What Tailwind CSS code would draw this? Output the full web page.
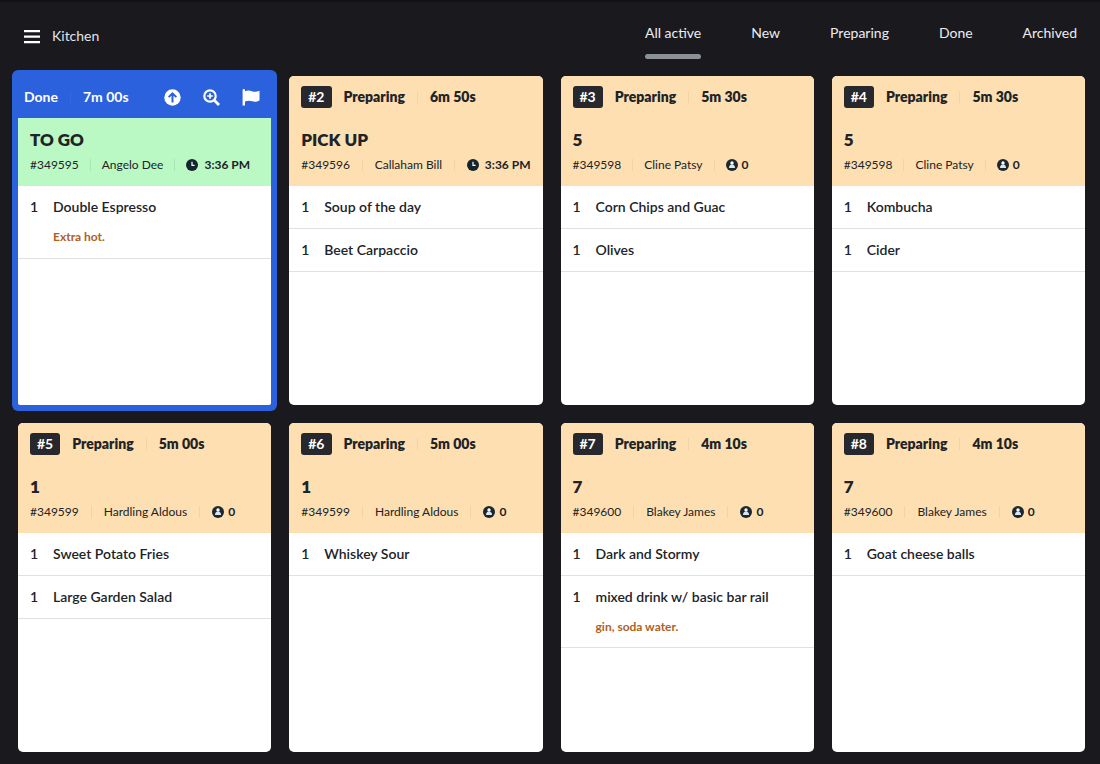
<!DOCTYPE html>
<html lang="en">
<head>
<meta charset="utf-8">
<meta name="viewport" content="width=device-width, initial-scale=1">
<title>Kitchen</title>
<script src="https://cdn.jsdelivr.net/npm/@tailwindcss/browser@4"></script>
</head>
<body class="flex min-h-screen flex-col border-t-2 border-[#111116] bg-[#19191e] font-['Lato',sans-serif] text-sm text-[#202328]">
<svg class="hidden" aria-hidden="true">
  <symbol id="clock" viewBox="0 0 12 12"><circle cx="6" cy="6" r="6" fill="#14242e"/><path d="M6 2.8V6.4H8.6" fill="none" stroke="#fff" stroke-width="1.2"/></symbol>
  <symbol id="guest" viewBox="0 0 12 12"><circle cx="6" cy="6" r="6" fill="#1c2730"/><circle cx="6" cy="4" r="1.7" fill="#fff"/><path d="M3 9C3 7 4 5.600 6 5.600S9 7 9 9Z" fill="#dce6ee"/></symbol>
</svg>

<header class="flex h-[74px] shrink-0 items-start justify-between pl-6 pr-[23px]">
  <div class="flex items-center gap-3 pt-6">
    <button type="button" aria-label="Open menu"><svg class="h-5 w-4" viewBox="0 0 16 20" fill="#fff"><path d="M0 4h16v2.300H0zM0 9.500h16v2.300H0zM0 15h16v2.300H0z"/></svg></button>
    <h1 class="leading-5 text-[#e4e4e7]">Kitchen</h1>
  </div>
  <nav class="flex gap-[50px] pt-[21px] leading-5 text-[#ededf0]">
    <a href="#all" aria-current="page">All active<span class="mt-[11px] block h-[5px] rounded-full bg-[#8b9195]"></span></a>
    <a href="#new">New</a>
    <a href="#preparing">Preparing</a>
    <a href="#done">Done</a>
    <a href="#archived">Archived</a>
  </nav>
</header>

<main class="grid flex-1 grid-cols-4 grid-rows-2 gap-[18px] pb-3 pl-[18px] pr-[15px]">

  <article class="rounded-xs bg-white ring-6 ring-[#2b61dd]">
    <div class="flex h-[42px] items-center gap-3 bg-[#2b61dd] pl-1.5 pr-[11px] font-bold text-white">
      <span>Done</span><span class="h-3 w-px bg-[#3568de]"></span><span>7m 00s</span>
      <div class="ml-auto flex items-center gap-[22px]">
        <button type="button" aria-label="Move up"><svg class="size-[17px]" viewBox="0 0 17 17"><circle cx="8.500" cy="8.500" r="8.200" fill="#fff"/><path d="M8.500 13.500V4.500M4.700 8.100L8.500 4.300L12.300 8.100" fill="none" stroke="#2b61dd" stroke-width="2"/></svg></button>
        <button type="button" aria-label="Zoom in"><svg class="size-[17px]" viewBox="0 0 17 17" fill="none" stroke="#fff"><circle cx="7" cy="7" r="5.700" stroke-width="2.200"/><path d="M11.300 11.300L16 16" stroke-width="2.800"/><path d="M7 4.200V9.800M4.200 7H9.800" stroke-width="1.700"/></svg></button>
        <button type="button" aria-label="Flag order"><svg class="h-[17px] w-[18px]" viewBox="0 0 18 17" fill="#fff"><path d="M.6 1.200a1.200 1.200 0 0 1 2.400 0v1C6 .8 8 1.500 10 2.300s4 .8 7.500-.6v9.800c-3 1.500-5 1.500-7.300.8S5.800 11.200 3 12.600V16.500H.6Z"/></svg></button>
      </div>
    </div>
    <div class="bg-[#bbf9c4] px-3 pb-3 pt-2.5">
      <h2 class="text-[17px]/6 font-extrabold">TO GO</h2>
      <div class="mt-1 flex items-center gap-[11px] whitespace-nowrap text-xs/[18px]"><span>#349595</span><span class="h-3 w-px bg-[#a9e6b6]"></span><span>Angelo Dee</span><span class="h-3 w-px bg-[#a9e6b6]"></span><span class="flex items-center gap-1.5 font-bold"><svg class="size-3"><use href="#clock"/></svg>3:36 PM</span></div>
    </div>
    <ul class="font-semibold leading-5">
      <li class="flex border-b border-[#e0e1e3] px-3 py-[11px]"><span class="w-[23px]">1</span><div class="pb-px"><p>Double Espresso</p><p class="mt-[11px] text-xs/[18px] font-bold text-[#b0611f]">Extra hot.</p></div></li>
    </ul>
  </article>

  <article class="overflow-hidden rounded-[5px] bg-white">
    <div class="bg-[#fddfb1] px-3 pb-3">
      <div class="flex h-[42px] items-center gap-3 font-extrabold"><span class="rounded-[3px] bg-[#26282e] px-[7px] font-bold leading-[22px] text-white">#2</span><span>Preparing</span><span class="h-3 w-px bg-[#f0d3a6]"></span><span>6m 50s</span></div>
      <h2 class="mt-2.5 text-[17px]/6 font-extrabold">PICK UP</h2>
      <div class="mt-1 flex items-center gap-3 whitespace-nowrap text-xs/[18px]"><span>#349596</span><span class="h-3 w-px bg-[#f0d3a6]"></span><span>Callaham Bill</span><span class="h-3 w-px bg-[#f0d3a6]"></span><span class="flex items-center gap-1.5 font-bold"><svg class="size-3"><use href="#clock"/></svg>3:36 PM</span></div>
    </div>
    <ul class="font-semibold leading-5">
      <li class="flex border-b border-[#e0e1e3] px-3 py-[11px]"><span class="w-[23px]">1</span>Soup of the day</li>
      <li class="flex border-b border-[#e0e1e3] px-3 py-[11px]"><span class="w-[23px]">1</span>Beet Carpaccio</li>
    </ul>
  </article>

  <article class="overflow-hidden rounded-[5px] bg-white">
    <div class="bg-[#fddfb1] px-3 pb-3">
      <div class="flex h-[42px] items-center gap-3 font-extrabold"><span class="rounded-[3px] bg-[#26282e] px-[7px] font-bold leading-[22px] text-white">#3</span><span>Preparing</span><span class="h-3 w-px bg-[#f0d3a6]"></span><span>5m 30s</span></div>
      <h2 class="mt-2.5 text-[17px]/6 font-extrabold">5</h2>
      <div class="mt-1 flex items-center gap-[11px] whitespace-nowrap text-xs/[18px]"><span>#349598</span><span class="h-3 w-px bg-[#f0d3a6]"></span><span>Cline Patsy</span><span class="h-3 w-px bg-[#f0d3a6]"></span><span class="flex items-center gap-1 font-bold"><svg class="size-3"><use href="#guest"/></svg>0</span></div>
    </div>
    <ul class="font-semibold leading-5">
      <li class="flex border-b border-[#e0e1e3] px-3 py-[11px]"><span class="w-[23px]">1</span>Corn Chips and Guac</li>
      <li class="flex border-b border-[#e0e1e3] px-3 py-[11px]"><span class="w-[23px]">1</span>Olives</li>
    </ul>
  </article>

  <article class="overflow-hidden rounded-[5px] bg-white">
    <div class="bg-[#fddfb1] px-3 pb-3">
      <div class="flex h-[42px] items-center gap-3 font-extrabold"><span class="rounded-[3px] bg-[#26282e] px-[7px] font-bold leading-[22px] text-white">#4</span><span>Preparing</span><span class="h-3 w-px bg-[#f0d3a6]"></span><span>5m 30s</span></div>
      <h2 class="mt-2.5 text-[17px]/6 font-extrabold">5</h2>
      <div class="mt-1 flex items-center gap-[11px] whitespace-nowrap text-xs/[18px]"><span>#349598</span><span class="h-3 w-px bg-[#f0d3a6]"></span><span>Cline Patsy</span><span class="h-3 w-px bg-[#f0d3a6]"></span><span class="flex items-center gap-1 font-bold"><svg class="size-3"><use href="#guest"/></svg>0</span></div>
    </div>
    <ul class="font-semibold leading-5">
      <li class="flex border-b border-[#e0e1e3] px-3 py-[11px]"><span class="w-[23px]">1</span>Kombucha</li>
      <li class="flex border-b border-[#e0e1e3] px-3 py-[11px]"><span class="w-[23px]">1</span>Cider</li>
    </ul>
  </article>

  <article class="overflow-hidden rounded-[5px] bg-white">
    <div class="bg-[#fddfb1] px-3 pb-3">
      <div class="flex h-[42px] items-center gap-3 font-extrabold"><span class="rounded-[3px] bg-[#26282e] px-[7px] font-bold leading-[22px] text-white">#5</span><span>Preparing</span><span class="h-3 w-px bg-[#f0d3a6]"></span><span>5m 00s</span></div>
      <h2 class="mt-2.5 text-[17px]/6 font-extrabold">1</h2>
      <div class="mt-1 flex items-center gap-3 whitespace-nowrap text-xs/[18px]"><span>#349599</span><span class="h-3 w-px bg-[#f0d3a6]"></span><span>Hardling Aldous</span><span class="h-3 w-px bg-[#f0d3a6]"></span><span class="flex items-center gap-1 font-bold"><svg class="size-3"><use href="#guest"/></svg>0</span></div>
    </div>
    <ul class="font-semibold leading-5">
      <li class="flex border-b border-[#e0e1e3] px-3 py-[11px]"><span class="w-[23px]">1</span>Sweet Potato Fries</li>
      <li class="flex border-b border-[#e0e1e3] px-3 py-[11px]"><span class="w-[23px]">1</span>Large Garden Salad</li>
    </ul>
  </article>

  <article class="overflow-hidden rounded-[5px] bg-white">
    <div class="bg-[#fddfb1] px-3 pb-3">
      <div class="flex h-[42px] items-center gap-3 font-extrabold"><span class="rounded-[3px] bg-[#26282e] px-[7px] font-bold leading-[22px] text-white">#6</span><span>Preparing</span><span class="h-3 w-px bg-[#f0d3a6]"></span><span>5m 00s</span></div>
      <h2 class="mt-2.5 text-[17px]/6 font-extrabold">1</h2>
      <div class="mt-1 flex items-center gap-3 whitespace-nowrap text-xs/[18px]"><span>#349599</span><span class="h-3 w-px bg-[#f0d3a6]"></span><span>Hardling Aldous</span><span class="h-3 w-px bg-[#f0d3a6]"></span><span class="flex items-center gap-1 font-bold"><svg class="size-3"><use href="#guest"/></svg>0</span></div>
    </div>
    <ul class="font-semibold leading-5">
      <li class="flex border-b border-[#e0e1e3] px-3 py-[11px]"><span class="w-[23px]">1</span>Whiskey Sour</li>
    </ul>
  </article>

  <article class="overflow-hidden rounded-[5px] bg-white">
    <div class="bg-[#fddfb1] px-3 pb-3">
      <div class="flex h-[42px] items-center gap-3 font-extrabold"><span class="rounded-[3px] bg-[#26282e] px-[7px] font-bold leading-[22px] text-white">#7</span><span>Preparing</span><span class="h-3 w-px bg-[#f0d3a6]"></span><span>4m 10s</span></div>
      <h2 class="mt-2.5 text-[17px]/6 font-extrabold">7</h2>
      <div class="mt-1 flex items-center gap-3 whitespace-nowrap text-xs/[18px]"><span>#349600</span><span class="h-3 w-px bg-[#f0d3a6]"></span><span>Blakey James</span><span class="h-3 w-px bg-[#f0d3a6]"></span><span class="flex items-center gap-1 font-bold"><svg class="size-3"><use href="#guest"/></svg>0</span></div>
    </div>
    <ul class="font-semibold leading-5">
      <li class="flex border-b border-[#e0e1e3] px-3 py-[11px]"><span class="w-[23px]">1</span>Dark and Stormy</li>
      <li class="flex border-b border-[#e0e1e3] px-3 py-[11px]"><span class="w-[23px]">1</span><div><p>mixed drink w/ basic bar rail</p><p class="mt-[11px] text-xs/[18px] font-bold text-[#b0611f]">gin, soda water.</p></div></li>
    </ul>
  </article>

  <article class="overflow-hidden rounded-[5px] bg-white">
    <div class="bg-[#fddfb1] px-3 pb-3">
      <div class="flex h-[42px] items-center gap-3 font-extrabold"><span class="rounded-[3px] bg-[#26282e] px-[7px] font-bold leading-[22px] text-white">#8</span><span>Preparing</span><span class="h-3 w-px bg-[#f0d3a6]"></span><span>4m 10s</span></div>
      <h2 class="mt-2.5 text-[17px]/6 font-extrabold">7</h2>
      <div class="mt-1 flex items-center gap-3 whitespace-nowrap text-xs/[18px]"><span>#349600</span><span class="h-3 w-px bg-[#f0d3a6]"></span><span>Blakey James</span><span class="h-3 w-px bg-[#f0d3a6]"></span><span class="flex items-center gap-1 font-bold"><svg class="size-3"><use href="#guest"/></svg>0</span></div>
    </div>
    <ul class="font-semibold leading-5">
      <li class="flex border-b border-[#e0e1e3] px-3 py-[11px]"><span class="w-[23px]">1</span>Goat cheese balls</li>
    </ul>
  </article>
</main>
</body>
</html>
